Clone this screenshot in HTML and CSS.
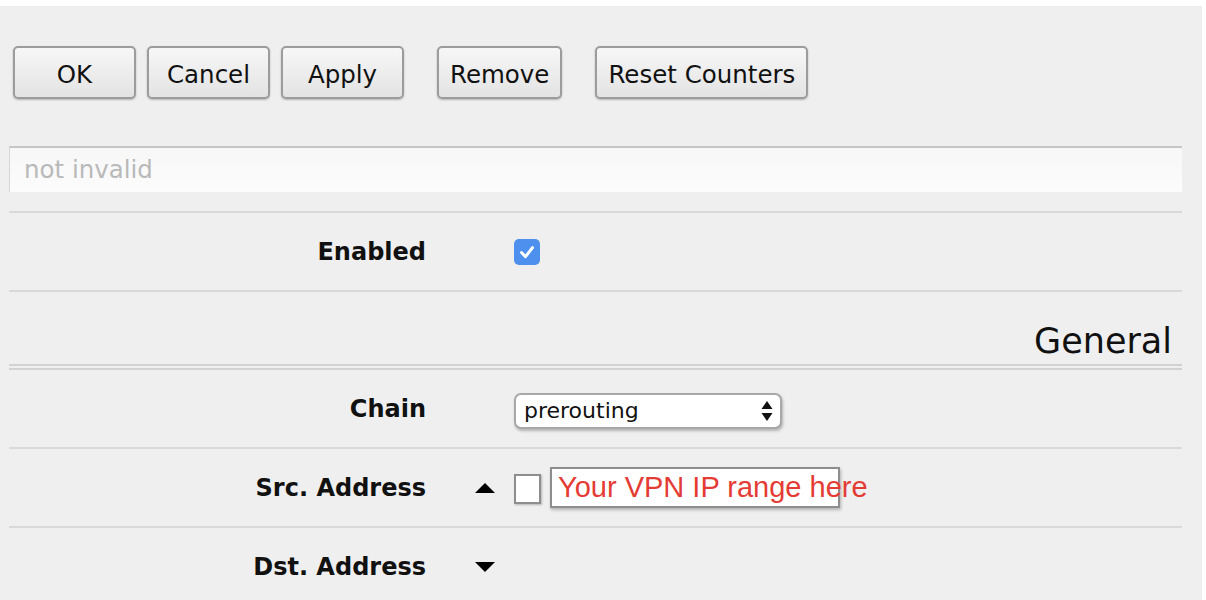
FILE: index.html
```html
<!DOCTYPE html>
<html>
<head>
<meta charset="utf-8">
<link rel="stylesheet" href="styles.css">
</head>
<body>
<div class="page">
  <div class="toolbar">
    <button class="btn">OK</button>
    <button class="btn">Cancel</button>
    <button class="btn">Apply</button>
    <button class="btn sep">Remove</button>
    <button class="btn sep">Reset Counters</button>
  </div>
  <div class="comment">not invalid</div>
  <div class="form">
    <div class="row">
      <div class="label">Enabled</div>
      <div class="arrow"></div>
      <div class="value"><span class="check-on"><svg width="26" height="26" viewBox="0 0 26 26"><path d="M7.5 13.5l4 4.2 7-9" fill="none" stroke="#fff" stroke-width="3" stroke-linecap="round" stroke-linejoin="round"/></svg></span></div>
    </div>
    <div class="row header">
      <div class="section">General</div>
    </div>
    <div class="row double">
      <div class="label">Chain</div>
      <div class="arrow"></div>
      <div class="value">
        <div class="select"><span>prerouting</span><svg width="14" height="22" viewBox="0 0 14 22"><path d="M7 1L12.5 9H1.5Z M7 21L12.5 13H1.5Z" fill="#111"/></svg></div>
      </div>
    </div>
    <div class="row">
      <div class="label">Src. Address</div>
      <div class="arrow"><svg width="22" height="12" viewBox="0 0 22 12"><path d="M11 1L21 11H1Z" fill="#000"/></svg></div>
      <div class="value">
        <span class="check-off"></span>
        <span class="textbox">Your VPN IP range here</span>
      </div>
    </div>
    <div class="row">
      <div class="label">Dst. Address</div>
      <div class="arrow"><svg width="22" height="12" viewBox="0 0 22 12"><path d="M11 11L21 1H1Z" fill="#000"/></svg></div>
      <div class="value"></div>
    </div>
  </div>
</div>
</body>
</html>
```
FILE: styles.css
```css
html, body {
  margin: 0;
  padding: 0;
  background: #ffffff;
}
body {
  padding-top: 6px;
  font-family: "DejaVu Sans", "Noto Sans", sans-serif;
  color: #111;
}
.page {
  width: 1202px;
  height: 594px;
  background: #efefef;
  padding: 40px 0 0 9px;
  box-sizing: border-box;
  overflow: hidden;
}
.toolbar {
  display: flex;
  gap: 11px;
  padding-left: 4px;
}
.btn {
  height: 53px;
  min-width: 123px;
  padding: 3px 11px 0;
  font-family: "DejaVu Sans", sans-serif;
  font-size: 24.5px;
  color: #111;
  border: 2px solid #9c9c9c;
  border-radius: 5px;
  background: linear-gradient(#f7f7f7, #e3e3e3);
  box-shadow: 0 1px 2px rgba(0,0,0,0.25);
}
.btn.sep {
  margin-left: 22px;
}
.comment {
  margin-top: 47px;
  width: 1173px;
  height: 46px;
  box-sizing: border-box;
  border-top: 2px solid #c6c6c6;
  border-left: 1px solid #d6d6d6;
  background: linear-gradient(#f7f7f7, #fcfcfc);
  padding-left: 14px;
  font-size: 24.5px;
  line-height: 44px;
  color: #b9b9b9;
}
.form {
  margin-top: 19px;
  width: 1173px;
}
.row {
  display: grid;
  grid-template-columns: 417px 48px 40px 1fr;
  grid-template-areas: "label gap arrow value";
  align-items: center;
  height: 79px;
  box-sizing: border-box;
  border-top: 2px solid #d9d9d9;
}
.row.double {
  height: 83px;
  border-top: 6px double #d2d2d2;
}
.row.header {
  display: flex;
  justify-content: flex-end;
  align-items: flex-end;
  height: 74px;
  padding: 0 10px 5px 0;
}
.section {
  font-size: 35px;
  line-height: 35px;
  color: #111;
}
.label {
  grid-area: label;
  text-align: right;
  font-weight: bold;
  font-size: 24px;
}
.arrow {
  grid-area: arrow;
  display: flex;
  align-items: center;
}
.value {
  grid-area: value;
  display: flex;
  align-items: center;
}
.check-on {
  width: 26px;
  height: 26px;
  border-radius: 5px;
  background: #4d90ee;
  display: block;
}
.check-on svg {
  display: block;
}
.select {
  width: 268px;
  height: 36px;
  box-sizing: border-box;
  background: #fff;
  border: 2px solid #a8a8a8;
  border-radius: 7px;
  box-shadow: 1px 2px 3px rgba(0,0,0,0.25);
  display: flex;
  align-items: center;
  justify-content: space-between;
  padding: 0 6px 0 8px;
  font-size: 22px;
  margin-top: 4px;
}
.select svg {
  display: block;
}
.check-off {
  width: 27px;
  height: 30px;
  box-sizing: border-box;
  background: #fff;
  border: 2px solid #8e8e8e;
  box-shadow: 1px 1px 2px rgba(0,0,0,0.25);
  display: block;
  margin-top: 2px;
}
.textbox {
  margin-left: 9px;
  width: 290px;
  height: 41px;
  box-sizing: border-box;
  background: #fff;
  border: 2px solid #8e8e8e;
  box-shadow: 1px 2px 3px rgba(0,0,0,0.25);
  padding-left: 6px;
  white-space: nowrap;
  overflow: visible;
  font-family: "Liberation Sans", Arial, sans-serif;
  font-size: 29px;
  line-height: 37px;
  color: #e53b35;
}
```
